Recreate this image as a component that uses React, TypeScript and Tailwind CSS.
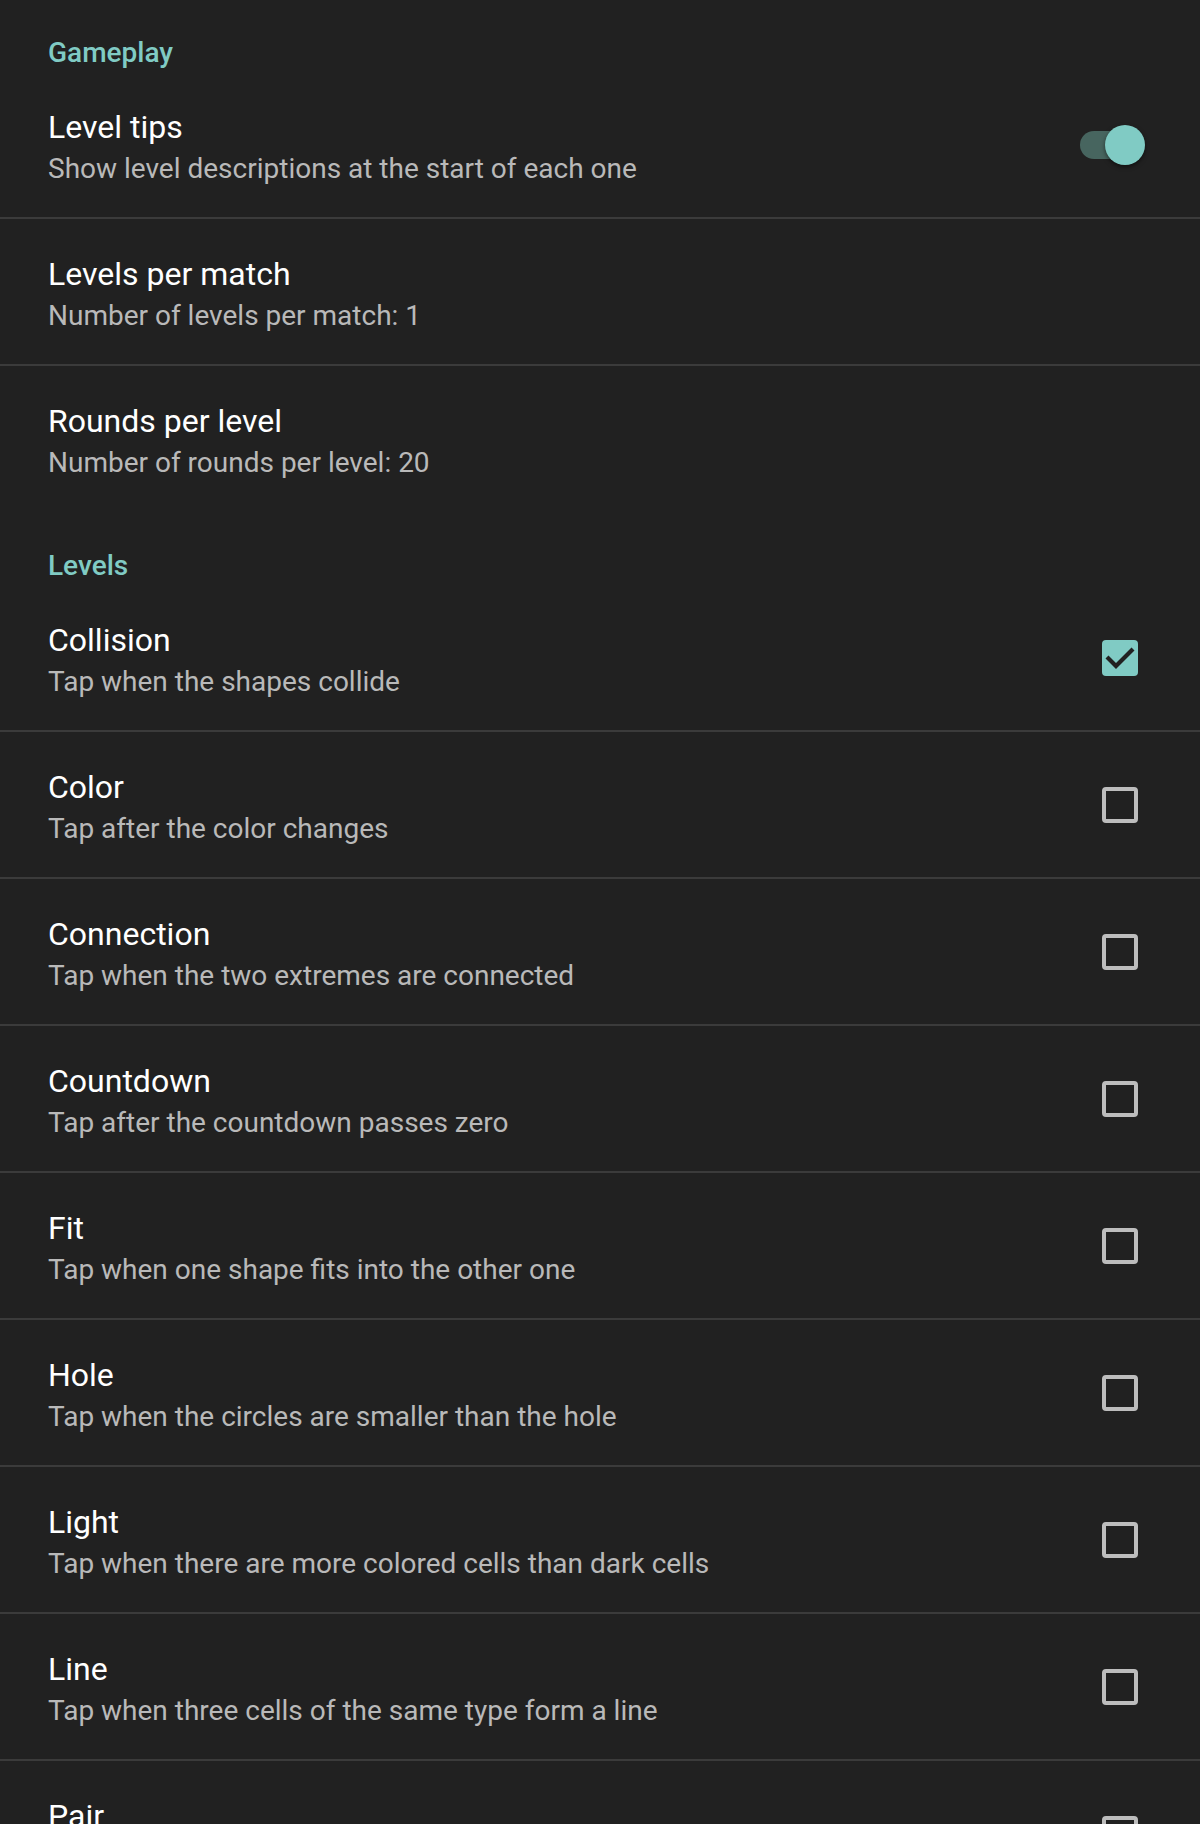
import { useState } from "react";

type Level = {
  id: string;
  title: string;
  summary?: string;
};

const levels: Level[] = [
  { id: "collision", title: "Collision", summary: "Tap when the shapes collide" },
  { id: "color", title: "Color", summary: "Tap after the color changes" },
  { id: "connection", title: "Connection", summary: "Tap when the two extremes are connected" },
  { id: "countdown", title: "Countdown", summary: "Tap after the countdown passes zero" },
  { id: "fit", title: "Fit", summary: "Tap when one shape fits into the other one" },
  { id: "hole", title: "Hole", summary: "Tap when the circles are smaller than the hole" },
  { id: "light", title: "Light", summary: "Tap when there are more colored cells than dark cells" },
  { id: "line", title: "Line", summary: "Tap when three cells of the same type form a line" },
  { id: "pair", title: "Pair" },
];

// category header, teal medium label
function CategoryHeader({ label, tall }: { label: string; tall?: boolean }) {
  return (
    <div className={tall ? "h-[74px] pl-[48px] pt-[39px]" : "h-[72px] pl-[48px] pt-[37px]"}>
      <div className="text-[28px] leading-[32px] font-medium text-[#80cbc4]">{label}</div>
    </div>
  );
}

function PrefRow({
  title,
  summary,
  divider = true,
  widget,
}: {
  title: string;
  summary?: string;
  divider?: boolean;
  widget?: React.ReactNode;
}) {
  return (
    <div className={divider ? "border-b-2 border-[#3b3b3b]" : ""}>
      <div className="flex h-[145px]">
        <div className="flex-1 pl-[48px] pt-[36px]">
          <div className="text-[32px] leading-[38px] text-white">{title}</div>
          {summary && (
            <div className="text-[28px] leading-[46px] text-[#b9b9b9]">{summary}</div>
          )}
        </div>
        <div className="w-[120px] flex items-center">{widget}</div>
      </div>
    </div>
  );
}

function Toggle({ on, onChange }: { on: boolean; onChange: () => void }) {
  return (
    <button onClick={onChange} className="relative w-[66px] h-[40px] p-0 border-none outline-none">
      <span
        className={`absolute left-0 top-[6px] w-[64px] h-[28px] rounded-full ${
          on ? "bg-[#47655f]" : "bg-[#5f5f5f]"
        }`}
      />
      <span
        className={`absolute top-0 w-[40px] h-[40px] rounded-full shadow-[0_2px_4px_rgba(0,0,0,0.5)] ${
          on ? "left-[25px] bg-[#80cbc4]" : "left-[-4px] bg-[#ececec]"
        }`}
      />
    </button>
  );
}

function Checkbox({ checked, onChange }: { checked: boolean; onChange: () => void }) {
  return (
    <button onClick={onChange} className="ml-[22px] w-[36px] h-[36px] p-0 border-none outline-none">
      {checked ? (
        <span className="block w-[36px] h-[36px] rounded-[4px] bg-[#80cbc4]">
          <svg width="36" height="36" viewBox="0 0 36 36">
            <polyline
              points="5,17 14,26 31,9"
              fill="none"
              stroke="#212121"
              strokeWidth="4.2"
            />
          </svg>
        </span>
      ) : (
        <span className="block w-[36px] h-[36px] rounded-[4px] border-4 border-[#bdbdbd]" />
      )}
    </button>
  );
}

export default function App() {
  const [levelTips, setLevelTips] = useState(true);
  const [enabled, setEnabled] = useState<Record<string, boolean>>({ collision: true });

  const toggleLevel = (id: string) => setEnabled((prev) => ({ ...prev, [id]: !prev[id] }));

  return (
    <div
      className="w-[1200px] h-[1824px] overflow-hidden bg-[#212121]"
      style={{ fontFamily: "Roboto, 'Noto Sans', sans-serif" }}
    >
      <CategoryHeader label="Gameplay" />
      <PrefRow
        title="Level tips"
        summary="Show level descriptions at the start of each one"
        widget={<Toggle on={levelTips} onChange={() => setLevelTips(!levelTips)} />}
      />
      <PrefRow title="Levels per match" summary="Number of levels per match: 1" />
      <PrefRow title="Rounds per level" summary="Number of rounds per level: 20" divider={false} />

      <CategoryHeader label="Levels" tall />
      {levels.map((lvl) => (
        <PrefRow
          key={lvl.id}
          title={lvl.title}
          summary={lvl.summary}
          widget={<Checkbox checked={!!enabled[lvl.id]} onChange={() => toggleLevel(lvl.id)} />}
        />
      ))}
    </div>
  );
}
